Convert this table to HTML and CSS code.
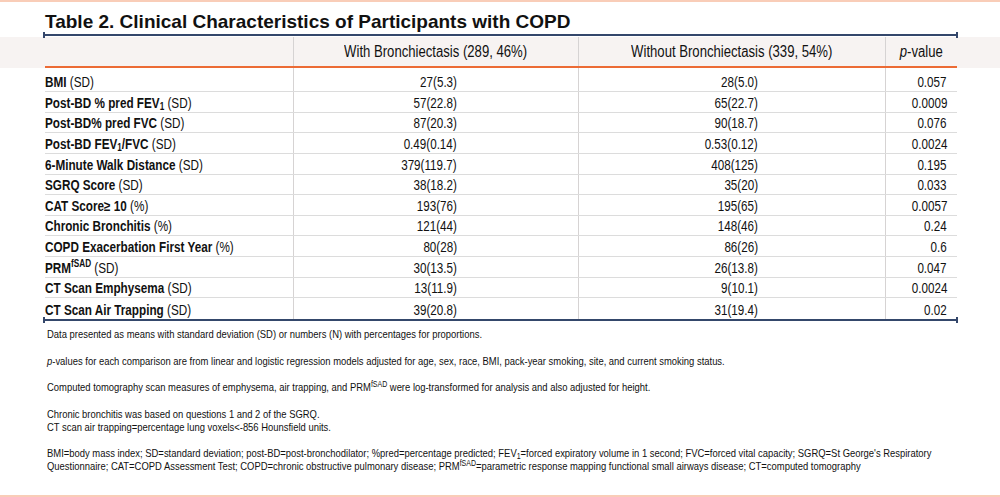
FILE: index.html
```html
<!DOCTYPE html>
<html>
<head>
<meta charset="utf-8">
<link rel="stylesheet" href="styles.css">
</head>
<body>
<div class="page">
  <h1 class="title">Table 2. Clinical Characteristics of Participants with COPD</h1>
  <div class="navy-rule"></div>
  <div class="head-band">
    <div class="grid head">
      <div class="c lbl"></div>
      <div class="c ctr"><span class="t">With Bronchiectasis (289, 46%)</span></div>
      <div class="c ctr"><span class="t">Without Bronchiectasis (339, 54%)</span></div>
      <div class="c ctr"><span class="t"><i>p</i>-value</span></div>
    </div>
  </div>
  <div class="body">
    <div class="grid row first"><div class="c lbl"><span class="t"><b>BMI</b> (SD)</span></div><div class="c num n1"><span class="t">27(5.3)</span></div><div class="c num n2"><span class="t">28(5.0)</span></div><div class="c num n3"><span class="t">0.057</span></div></div>
    <div class="grid row"><div class="c lbl"><span class="t"><b>Post-BD % pred FEV<sub>1</sub></b> (SD)</span></div><div class="c num n1"><span class="t">57(22.8)</span></div><div class="c num n2"><span class="t">65(22.7)</span></div><div class="c num n3"><span class="t">0.0009</span></div></div>
    <div class="grid row"><div class="c lbl"><span class="t"><b>Post-BD% pred FVC</b> (SD)</span></div><div class="c num n1"><span class="t">87(20.3)</span></div><div class="c num n2"><span class="t">90(18.7)</span></div><div class="c num n3"><span class="t">0.076</span></div></div>
    <div class="grid row"><div class="c lbl"><span class="t"><b>Post-BD FEV<sub>1</sub>/FVC</b> (SD)</span></div><div class="c num n1"><span class="t">0.49(0.14)</span></div><div class="c num n2"><span class="t">0.53(0.12)</span></div><div class="c num n3"><span class="t">0.0024</span></div></div>
    <div class="grid row"><div class="c lbl"><span class="t"><b>6-Minute Walk Distance</b> (SD)</span></div><div class="c num n1"><span class="t">379(119.7)</span></div><div class="c num n2"><span class="t">408(125)</span></div><div class="c num n3"><span class="t">0.195</span></div></div>
    <div class="grid row"><div class="c lbl"><span class="t"><b>SGRQ Score</b> (SD)</span></div><div class="c num n1"><span class="t">38(18.2)</span></div><div class="c num n2"><span class="t">35(20)</span></div><div class="c num n3"><span class="t">0.033</span></div></div>
    <div class="grid row"><div class="c lbl"><span class="t"><b>CAT Score≥ 10</b> (%)</span></div><div class="c num n1"><span class="t">193(76)</span></div><div class="c num n2"><span class="t">195(65)</span></div><div class="c num n3"><span class="t">0.0057</span></div></div>
    <div class="grid row"><div class="c lbl"><span class="t"><b>Chronic Bronchitis</b> (%)</span></div><div class="c num n1"><span class="t">121(44)</span></div><div class="c num n2"><span class="t">148(46)</span></div><div class="c num n3"><span class="t">0.24</span></div></div>
    <div class="grid row"><div class="c lbl"><span class="t"><b>COPD Exacerbation First Year</b> (%)</span></div><div class="c num n1"><span class="t">80(28)</span></div><div class="c num n2"><span class="t">86(26)</span></div><div class="c num n3"><span class="t">0.6</span></div></div>
    <div class="grid row"><div class="c lbl"><span class="t"><b>PRM<sup>fSAD</sup></b> (SD)</span></div><div class="c num n1"><span class="t">30(13.5)</span></div><div class="c num n2"><span class="t">26(13.8)</span></div><div class="c num n3"><span class="t">0.047</span></div></div>
    <div class="grid row"><div class="c lbl"><span class="t"><b>CT Scan Emphysema</b> (SD)</span></div><div class="c num n1"><span class="t">13(11.9)</span></div><div class="c num n2"><span class="t">9(10.1)</span></div><div class="c num n3"><span class="t">0.0024</span></div></div>
    <div class="grid row last"><div class="c lbl"><span class="t"><b>CT Scan Air Trapping</b> (SD)</span></div><div class="c num n1"><span class="t">39(20.8)</span></div><div class="c num n2"><span class="t">31(19.4)</span></div><div class="c num n3"><span class="t">0.02</span></div></div>
  </div>
  <div class="navy-rule bottom"></div>
  <div class="notes">
    <p>Data presented as means with standard deviation (SD) or numbers (N) with percentages for proportions.</p>
    <p><i>p</i>-values for each comparison are from linear and logistic regression models adjusted for age, sex, race, BMI, pack-year smoking, site, and current smoking status.</p>
    <p>Computed tomography scan measures of emphysema, air trapping, and PRM<sup>fSAD</sup> were log-transformed for analysis and also adjusted for height.</p>
    <p>Chronic bronchitis was based on questions 1 and 2 of the SGRQ.<br>CT scan air trapping=percentage lung voxels&lt;-856 Hounsfield units.</p>
    <p>BMI=body mass index; SD=standard deviation; post-BD=post-bronchodilator; %pred=percentage predicted; FEV<sub>1</sub>=forced expiratory volume in 1 second; FVC=forced vital capacity; SGRQ=St George's Respiratory<br>Questionnaire; CAT=COPD Assessment Test; COPD=chronic obstructive pulmonary disease; PRM<sup>fSAD</sup>=parametric response mapping functional small airways disease; CT=computed tomography</p>
  </div>
</div>
</body>
</html>
```

FILE: styles.css
```css
html, body {
  margin: 0;
  padding: 0;
  background: #ffffff;
}
body {
  width: 1000px;
  height: 497px;
  overflow: hidden;
  font-family: "Liberation Sans", Arial, sans-serif;
  color: #111111;
}
.page {
  box-sizing: border-box;
  width: 1000px;
  height: 497px;
  border-top: 2px solid #f9cdb8;
  border-bottom: 2px solid #f9cdb8;
  padding-top: 9px;
  overflow: hidden;
}
.title {
  margin: 0 0 0 45px;
  font-weight: bold;
  font-size: 19px;
  line-height: 22px;
  color: #111111;
  height: 23px;
  white-space: nowrap;
}
.navy-rule {
  position: relative;
  margin: 0 42px 0 43px;
  height: 2px;
  background: #34476b;
}
.navy-rule::before,
.navy-rule::after {
  content: "";
  position: absolute;
  top: -2px;
  width: 2px;
  height: 6px;
  background: #34476b;
}
.navy-rule::before { left: 0; }
.navy-rule::after { right: 0; }
.head-band {
  background: #f7f3f2;
  margin-top: 1px;
}
.grid {
  display: grid;
  grid-template-columns: 248px 285px 307px 72px;
  margin-left: 45px;
  width: 912px;
}
.t {
  display: inline-block;
  white-space: nowrap;
  transform: scaleX(0.82);
}
.head {
  height: 29px;
  border-bottom: 2px solid #ec6b35;
  font-size: 16px;
}
.head .c {
  display: flex;
  align-items: center;
  justify-content: center;
  padding-top: 1px;
}
.head .t { transform-origin: 50% 50%; }
.c + .c {
  border-left: 1px solid #d6d3d3;
}
.row {
  box-sizing: border-box;
  height: 20.65px;
  border-bottom: 1px solid #dcdcdc;
}
.row.first { height: 24px; }
.row.last { border-bottom: none; }
.row .c {
  display: flex;
  align-items: flex-end;
  line-height: 14px;
  padding-bottom: 2px;
}
.lbl { font-size: 14.3px; }
.lbl .t { transform-origin: 0 50%; }
.lbl b { font-weight: bold; }
.num {
  justify-content: flex-end;
  font-size: 14.2px;
}
.num .t { transform-origin: 100% 50%; }
.n1 { padding-right: 121px; }
.n2 { padding-right: 127px; }
.n3 { padding-right: 10px; }
sub {
  font-size: 10px;
  vertical-align: -2px;
  line-height: 0;
}
sup {
  font-size: 10px;
  vertical-align: 6px;
  line-height: 0;
}
.notes {
  margin: 7px 0 0 47px;
  width: 1150px;
  font-size: 11.5px;
  line-height: 13px;
  color: #111111;
  white-space: nowrap;
  transform: scaleX(0.82);
  transform-origin: 0 0;
}
.notes p {
  margin: 0 0 13.5px 0;
}
.notes sup { font-size: 8.5px; vertical-align: 4px; }
.notes sub { font-size: 8.5px; vertical-align: -2px; }
```
